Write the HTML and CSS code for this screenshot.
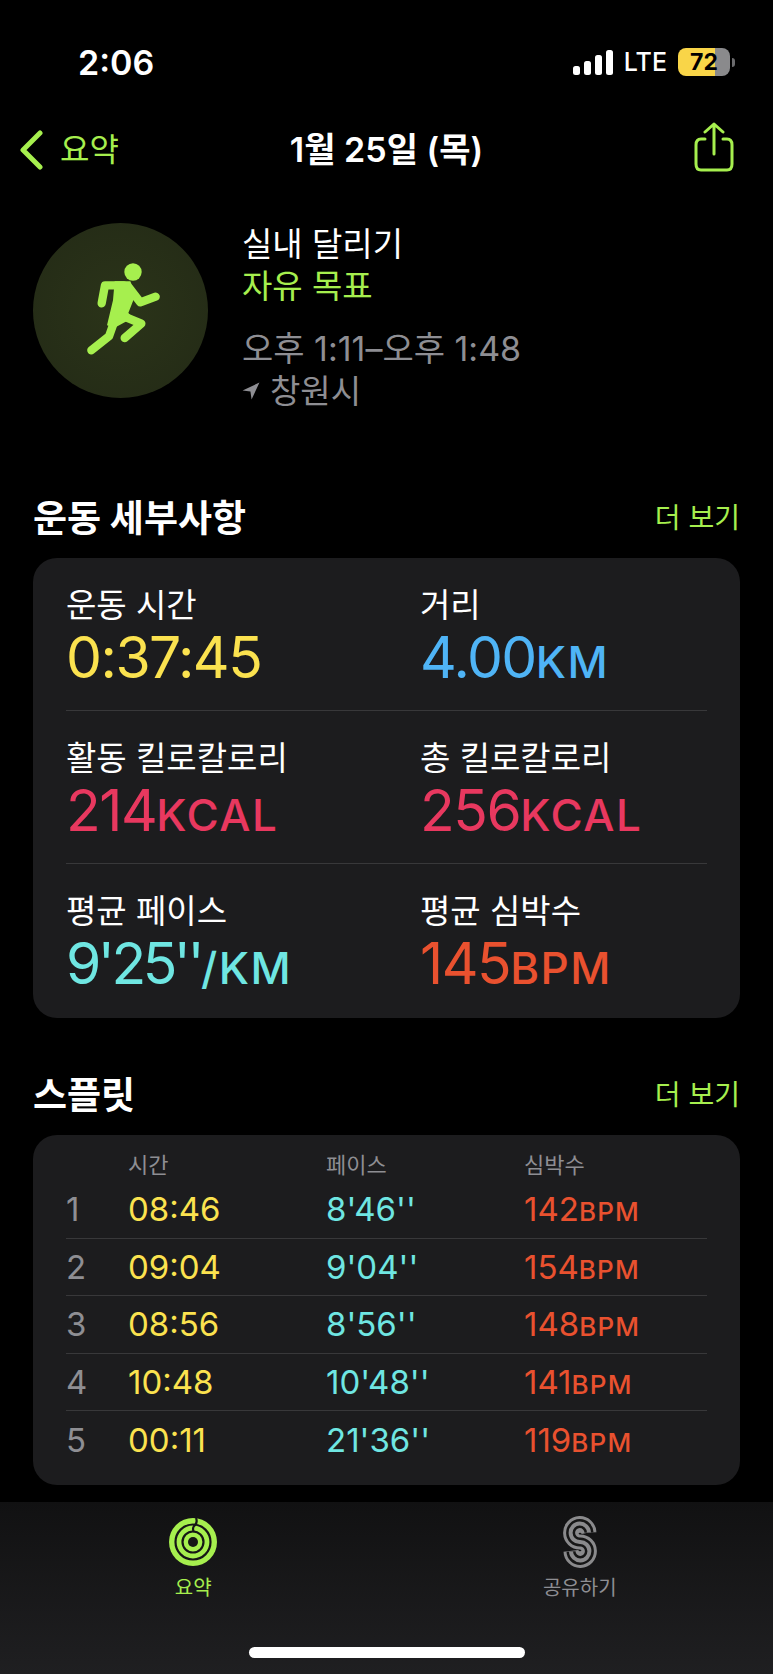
FILE: index.html
```html
<!DOCTYPE html>
<html lang="ko">

<head>
    <meta charset="UTF-8">
    <meta name="viewport" content="width=device-width, initial-scale=1.0">
    <title>실내 달리기</title>
    <link rel="stylesheet" href="styles.css">
</head>

<body>
    <div class="page">
        <!-- Status bar -->
        <div class="status">
            <span class="clock">2:06</span>
            <div class="status-right">
                <svg class="signal" viewBox="0 0 40 25" width="40" height="25">
                    <rect x="0" y="16" width="7" height="9" rx="2.5" />
                    <rect x="11" y="11" width="7" height="14" rx="2.5" />
                    <rect x="22" y="5" width="7" height="20" rx="2.5" />
                    <rect x="33" y="0" width="7" height="25" rx="2.5" />
                </svg>
                <span class="lte">LTE</span>
                <div class="battery"><span>72</span></div>
                <div class="battery-tip"></div>
            </div>
        </div>

        <!-- Nav -->
        <div class="nav">
            <div class="back">
                <svg viewBox="0 0 26 40" width="26" height="40">
                    <path d="M22 3 L5 20 L22 37" />
                </svg>
                <span>요약</span>
            </div>
            <div class="nav-title">1월 25일 (목)</div>
            <svg class="share" viewBox="0 0 42 50" width="42" height="50">
                <path d="M12 17 H8 Q3 17 3 23 V42 Q3 48 8 48 H34 Q39 48 39 42 V23 Q39 17 34 17 H30" />
                <path d="M21 32 V2 M12 10 L21 2 L30 10" />
            </svg>
        </div>

        <!-- Workout -->
        <div class="workout">
            <div class="workout-icon">
                <svg viewBox="100 38 525 525" width="175" height="175">
                    <circle class="fill" cx="400" cy="185" r="26" />
                    <path class="limb" d="M372 225 H316 L306 279" />
                    <path class="limb" d="M388 232 L422 276 L468 259" />
                    <polygon class="fill" points="345,213 392,213 408,252 386,308 400,322 345,352 322,345 340,270" />
                    <path class="limb" d="M345 330 L328 378 L275 420" />
                    <path class="limb" d="M365 315 L425 340 L375 383" />
                </svg>
            </div>
            <div class="workout-info">
                <div class="workout-name">실내 달리기</div>
                <div class="workout-goal">자유 목표</div>
                <div class="workout-time">오후 1:11–오후 1:48</div>
                <div class="workout-place">
                    <svg viewBox="0 0 16 16" width="18" height="18">
                        <path d="M15.5 0.5 L0.5 7.5 L7.5 8.5 L8.5 15.5 Z" />
                    </svg>
                    창원시
                </div>
            </div>
        </div>

        <!-- 운동 세부사항 -->
        <div class="section-head">
            <h2>운동 세부사항</h2>
            <span class="more">더 보기</span>
        </div>
        <div class="card details">
            <div class="detail-row">
                <div class="stat">
                    <div class="stat-label">운동 시간</div>
                    <div class="stat-value yellow">0:37:45</div>
                </div>
                <div class="stat">
                    <div class="stat-label">거리</div>
                    <div class="stat-value blue">4.00<small>KM</small></div>
                </div>
            </div>
            <div class="detail-row">
                <div class="stat">
                    <div class="stat-label">활동 킬로칼로리</div>
                    <div class="stat-value pink">214<small>KCAL</small></div>
                </div>
                <div class="stat">
                    <div class="stat-label">총 킬로칼로리</div>
                    <div class="stat-value pink">256<small>KCAL</small></div>
                </div>
            </div>
            <div class="detail-row">
                <div class="stat">
                    <div class="stat-label">평균 페이스</div>
                    <div class="stat-value cyan tight">9'25''<small>/KM</small></div>
                </div>
                <div class="stat">
                    <div class="stat-label">평균 심박수</div>
                    <div class="stat-value red">145<small>BPM</small></div>
                </div>
            </div>
        </div>

        <!-- 스플릿 -->
        <div class="section-head second">
            <h2>스플릿</h2>
            <span class="more">더 보기</span>
        </div>
        <div class="card splits">
            <div class="split-head">
                <span></span>
                <span>시간</span>
                <span>페이스</span>
                <span>심박수</span>
            </div>
            <div class="split-row">
                <span class="num">1</span>
                <span class="yellow">08:46</span>
                <span class="cyan">8'46''</span>
                <span class="red">142<small>BPM</small></span>
            </div>
            <div class="split-row">
                <span class="num">2</span>
                <span class="yellow">09:04</span>
                <span class="cyan">9'04''</span>
                <span class="red">154<small>BPM</small></span>
            </div>
            <div class="split-row">
                <span class="num">3</span>
                <span class="yellow">08:56</span>
                <span class="cyan">8'56''</span>
                <span class="red">148<small>BPM</small></span>
            </div>
            <div class="split-row">
                <span class="num">4</span>
                <span class="yellow">10:48</span>
                <span class="cyan">10'48''</span>
                <span class="red">141<small>BPM</small></span>
            </div>
            <div class="split-row">
                <span class="num">5</span>
                <span class="yellow">00:11</span>
                <span class="cyan">21'36''</span>
                <span class="red">119<small>BPM</small></span>
            </div>
        </div>

        <!-- Tab bar -->
        <div class="tabbar">
            <div class="tabs">
                <div class="tab active">
                    <svg viewBox="0 0 48 54" width="48" height="54">
                        <circle class="ring-base" cx="24" cy="27" r="24" />
                        <circle class="ring-cut" cx="24" cy="27" r="17.5" />
                        <circle class="ring-cut" cx="24" cy="27" r="10.5" />
                        <circle class="ring-hole" cx="24" cy="27" r="5" />
                        <path class="ring-cut" d="M27 3 Q29 8 25 11 Q23 14 25 17" />
                    </svg>
                    <span>요약</span>
                </div>
                <div class="tab">
                    <svg viewBox="0 0 36 54" width="36" height="54">
                        <path class="s1" d="M27 17.5 A9.2 9.2 0 1 0 18 27 A9.2 9.2 0 1 1 9 36.5 A9.2 9.2 0 0 0 27 36.5 A9.2 9.2 0 0 0 18 27 A9.2 9.2 0 0 1 9 17.5 A9.2 9.2 0 0 1 27 17.5" />
                        <path class="s2" d="M27 17.5 A9.2 9.2 0 1 0 18 27 A9.2 9.2 0 1 1 9 36.5" />
                        <path class="s3" d="M27 17.5 A9.2 9.2 0 1 0 18 27 A9.2 9.2 0 1 1 9 36.5" />
                    </svg>
                    <span>공유하기</span>
                </div>
            </div>
            <div class="home-bar"></div>
        </div>
    </div>
</body>

</html>
```

FILE: styles.css
```css
* {
    box-sizing: border-box;
}

body {
    margin: 0;
    background-color: #000;
    color: #fff;
    font-family: Inter, "Noto Sans CJK KR", sans-serif;
}

.page {
    width: 773px;
    height: 1674px;
    display: flex;
    flex-direction: column;
    overflow: hidden;
}

.yellow { color: #fbe24f; }
.blue { color: #4fb4f6; }
.pink { color: #e8385f; }
.cyan { color: #6fe6e2; }
.red { color: #e9512f; }

/* Status bar */
.status {
    height: 121px;
    padding: 3px 38px 0 78px;
    display: flex;
    justify-content: space-between;
    align-items: center;
}

.clock {
    font-size: 34px;
    font-weight: 600;
}

.status-right {
    display: flex;
    align-items: center;
}

.signal {
    fill: #fff;
    margin-right: 11px;
}

.lte {
    font-size: 25px;
    font-weight: 500;
    margin-right: 11px;
}

.battery {
    width: 52px;
    height: 28px;
    border-radius: 8px;
    background: linear-gradient(to right, #f9d548 72%, #8a8a8c 72%);
    color: #000;
    font-size: 23px;
    font-weight: 700;
    text-align: center;
    line-height: 28px;
}

.battery-tip {
    width: 3px;
    height: 9px;
    margin-left: 2px;
    border-radius: 0 3px 3px 0;
    background-color: #6b6b6d;
}

/* Nav */
.nav {
    height: 52px;
    padding: 0 38px 0 18px;
    display: flex;
    justify-content: space-between;
    align-items: center;
}

.back {
    width: 190px;
    display: flex;
    align-items: center;
    gap: 16px;
    color: #a6ef4e;
    font-size: 32px;
}

.back svg {
    margin-top: 5px;
}

.back svg path,
.share path {
    fill: none;
    stroke: #a6ef4e;
    stroke-linecap: round;
    stroke-linejoin: round;
}

.back svg path {
    stroke-width: 5;
}

.share path {
    stroke-width: 3;
}

.nav-title {
    font-size: 34px;
    font-weight: 600;
}

.share {
    margin-left: 128px;
}

/* Workout */
.workout {
    padding: 50px 33px 84px;
    display: flex;
    gap: 34px;
}

.workout-icon {
    width: 175px;
    height: 175px;
    border-radius: 50%;
    background: radial-gradient(circle, #2b3419, #232a16);
}

.workout-icon svg {
    display: block;
}

.fill {
    fill: #a6ef4e;
}

.limb {
    fill: none;
    stroke: #a6ef4e;
    stroke-width: 25;
    stroke-linecap: round;
    stroke-linejoin: round;
}

.workout-info {
    font-size: 33px;
    line-height: 42px;
}

.workout-goal {
    color: #a6ef4e;
}

.workout-time {
    margin-top: 21px;
    color: #8e8e93;
    font-size: 34px;
}

.workout-place {
    color: #8e8e93;
    display: flex;
    align-items: center;
    gap: 10px;
}

.workout-place svg {
    fill: #8e8e93;
}

/* Sections */
.section-head {
    height: 40px;
    margin: 0 33px 22px;
    display: flex;
    justify-content: space-between;
    align-items: center;
}

.section-head.second {
    margin-top: 55px;
}

h2 {
    margin: 0;
    font-size: 37px;
    font-weight: 700;
}

.more {
    color: #a6ef4e;
    font-size: 28px;
}

.card {
    margin: 0 33px;
    border-radius: 24px;
    background-color: #1c1c1e;
    padding: 0 33px;
}

.details {
    padding-bottom: 1px;
}

/* Details */
.detail-row {
    height: 153px;
    display: grid;
    grid-template-columns: 354px 1fr;
    border-bottom: 1px solid #38383a;
    padding-top: 26px;
}

.detail-row:last-child {
    border-bottom: none;
}

.stat-label {
    font-size: 33px;
    line-height: 42px;
}

.stat-value {
    font-size: 57px;
    line-height: 64px;
    letter-spacing: -1.5px;
}

.stat-value.tight {
    letter-spacing: -3.5px;
}

.stat-value small {
    font-size: 44px;
    font-weight: 500;
    letter-spacing: 1.5px;
}

/* Splits */
.splits {
    height: 350px;
}

.split-head,
.split-row {
    display: grid;
    grid-template-columns: 62px 198px 198px 1fr;
}

.split-head {
    height: 46px;
    padding-top: 15px;
    color: #8e8e93;
    font-size: 22px;
    line-height: 30px;
}

.split-row {
    height: 57.5px;
    border-bottom: 1px solid #38383a;
    align-items: center;
    font-size: 33px;
}

.split-row:last-child {
    border-bottom: none;
}

.split-row small {
    font-size: 26px;
    font-weight: 500;
    letter-spacing: 1.2px;
}

.num {
    color: #8e8e93;
}

/* Tab bar */
.tabbar {
    margin-top: auto;
    height: 172px;
    background: linear-gradient(#111112, #1f1f21);
    display: flex;
    flex-direction: column;
}

.tabs {
    display: flex;
    padding-top: 13px;
}

.tab {
    width: 50%;
    display: flex;
    flex-direction: column;
    align-items: center;
    color: #8e8e93;
    font-size: 20px;
    line-height: 28px;
    gap: 5px;
}

.tab.active {
    color: #a6ef4e;
}

.ring-base {
    fill: #a6ef4e;
}

.ring-cut {
    fill: none;
    stroke: #161616;
    stroke-width: 2.2;
}

.ring-hole {
    fill: #161616;
}

.s1,
.s2,
.s3 {
    fill: none;
}

.s1 {
    stroke: #8a8a8c;
    stroke-width: 15;
}

.s2 {
    stroke: #161616;
    stroke-width: 9;
}

.s3 {
    stroke: #8a8a8c;
    stroke-width: 4;
}

.home-bar {
    width: 276px;
    height: 11px;
    margin: 45px auto 0;
    border-radius: 6px;
    background-color: #fff;
}
```
